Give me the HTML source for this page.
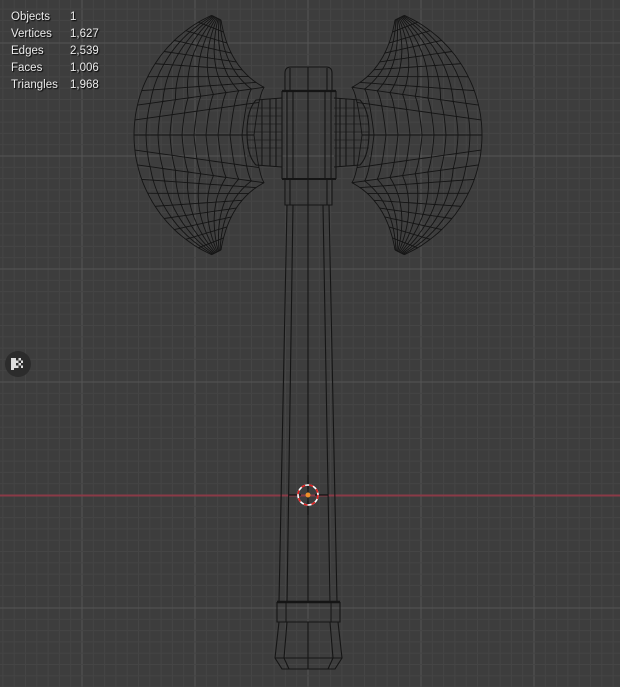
<!DOCTYPE html>
<html><head><meta charset="utf-8"><style>
html,body{margin:0;padding:0;background:#3d3d3d;width:620px;height:687px;overflow:hidden}
#v{position:absolute;left:0;top:0}
.st{position:absolute;left:11px;top:9px;font:11.5px "Liberation Sans",sans-serif;color:#ececec;text-shadow:1px 1px 1px #000;line-height:17px}
.st div span{display:inline-block;width:59px}
</style></head><body>
<svg id="v" width="620" height="687" xmlns="http://www.w3.org/2000/svg">
<g id="grid"></g>
<rect x="0" y="494.5" width="620" height="2" fill="#8a3a47"/>
<g id="mesh" fill="none" stroke="#141414" stroke-width="0.9" stroke-linejoin="round"></g>
<g fill="none" stroke="#151515" stroke-width="1.1">
<path d="M282 98 L256 100 Q247 110 247 132 Q247 156 256 165 L282 167"/>
<path d="M334 98 L360 100 Q369 110 369 132 Q369 156 360 165 L334 167"/>
<path d="M262 100 V165 M270 99 V166 M276 98 V167 M354 100 V165 M346 99 V166 M340 98 V167"/>
<path d="M247 108 H282 M247 116 H282 M247 124 H282 M247 132 H282 M247 140 H282 M247 148 H282 M247 156 H282 M334 108 H369 M334 116 H369 M334 124 H369 M334 132 H369 M334 140 H369 M334 148 H369 M334 156 H369" stroke-width="0.6"/>
<path d="M285 91 V73 Q285 67 291 67 H326 Q332 67 332 73 V91"/>
<path d="M290 68 V91 M327 68 V91 M308 67 V91"/>
<path d="M282 91 H336" stroke-width="2.2"/>
<path d="M282 91 V179 M336 91 V179 M287 91 V179 M331 91 V179 M308 91 V179 M293 91 V179 M325 91 V179"/>
<path d="M285 179 V205 H332 V179 M290 179 V205 M327 179 V205 M308 179 V205"/>
<path d="M282 179 H336" stroke-width="2"/>
<path d="M287 205 L279 602 M329 205 L337 602 M293 205 L287 602 M323 205 L330 602 M308 205 V602"/>
<path d="M277 602 H340" stroke-width="2.4"/>
<path d="M277 602 V622 H340 V602 M286 602 V622 M331 602 V622"/>
<path d="M279 622 L275 658 L282 669 H335 L342 658 L338 622 M287 622 L284 658 L289 669 M330 622 L333 658 L328 669 M275 658 H342 M308 622 V669"/>
</g>
<g>
<path d="M308 475 V489 M308 501 V515 M289 495 H301 M315 495 H328" stroke="#111" stroke-width="1.2"/>
<circle cx="308" cy="495" r="10" fill="none" stroke="#fff" stroke-width="1.6"/>
<circle cx="308" cy="495" r="10" fill="none" stroke="#e02020" stroke-width="1.6" stroke-dasharray="4 4"/>
<circle cx="308" cy="495" r="2.5" fill="#f0902a"/>
</g>
<circle cx="18" cy="364" r="13" fill="#2c2c2c"/>
<rect x="11" y="358" width="3" height="12" fill="#ddd"/>
<rect x="13" y="358" width="10" height="10" fill="#ddd"/>
<g fill="#2a2a2a"><rect x="16" y="358" width="2.5" height="2.5"/><rect x="18.5" y="360.5" width="2.5" height="2.5"/><rect x="16" y="363" width="2.5" height="2.5"/><rect x="18.5" y="365.5" width="2.5" height="2.5"/><rect x="21" y="358" width="2" height="2.5"/><rect x="21" y="363" width="2" height="2.5"/></g>
</svg>
<div class="st">
<div><span>Objects</span>1</div>
<div><span>Vertices</span>1,627</div>
<div><span>Edges</span>2,539</div>
<div><span>Faces</span>1,006</div>
<div><span>Triangles</span>1,968</div>
</div>
<script>
var g=document.getElementById("grid"),h="";
for(var i=-30;i<=30;i++){var x=308+i*11.3;if(x<-1||x>621)continue;var maj=(i%10==0);h+='<rect x="'+(x-0.5).toFixed(1)+'" y="0" width="1" height="687" fill="'+(maj?'#555555':'#454545')+'"/>';}
for(var i=-50;i<=30;i++){var y=495+i*11.3;if(y<-1||y>688)continue;var maj=(i%10==0);if(i==0)continue;h+='<rect x="0" y="'+(y-0.5).toFixed(1)+'" width="620" height="1" fill="'+(maj?'#555555':'#454545')+'"/>';}
g.innerHTML=h;
function bez(p0,p1,p2,p3,t){var u=1-t;return [u*u*u*p0[0]+3*u*u*t*p1[0]+3*u*t*t*p2[0]+t*t*t*p3[0],u*u*u*p0[1]+3*u*u*t*p1[1]+3*u*t*t*p2[1]+t*t*t*p3[1]];}
function outer(u){var a=(-66+132*u)*Math.PI/180;return [265-131*Math.cos(a),135+131*Math.sin(a)];}
var B=[[221,20],[228,62],[250,86],[282,94]];
function innerTop(t){
 if(t<=0.8)return bez(B[0],B[1],B[2],B[3],t*1.0);
 var k=(t-0.8)/0.2;var b=bez(B[0],B[1],B[2],B[3],0.8);var q=[254,100+k*35];
 return [b[0]+(q[0]-b[0])*k,b[1]+(q[1]-b[1])*k];}
function inner(u){
 if(u<=0.5)return innerTop(u/0.5);
 var m=innerTop((1-u)/0.5);return [m[0],270-m[1]];}
function P(u,v){var o=outer(u),n=inner(u);return [o[0]+(n[0]-o[0])*v,o[1]+(n[1]-o[1])*v];}
function path(pts,mir){var d="";for(var k=0;k<pts.length;k++){var x=mir?616-pts[k][0]:pts[k][0];d+=(k?"L":"M")+x.toFixed(1)+" "+pts[k][1].toFixed(1);}return '<path d="'+d+'"/>';}
var s="",NU=20,NV=10;
for(var mir=0;mir<2;mir++){
 for(var j=0;j<=NV;j++){var pts=[];for(var i=0;i<=60;i++)pts.push(P(i/60,j/NV));s+=path(pts,mir);}
 for(var i=0;i<=NU;i++){var pts=[];for(var j=0;j<=20;j++)pts.push(P(i/NU,j/20));s+=path(pts,mir);}
}
document.getElementById("mesh").innerHTML=s;
</script>
</body></html>
